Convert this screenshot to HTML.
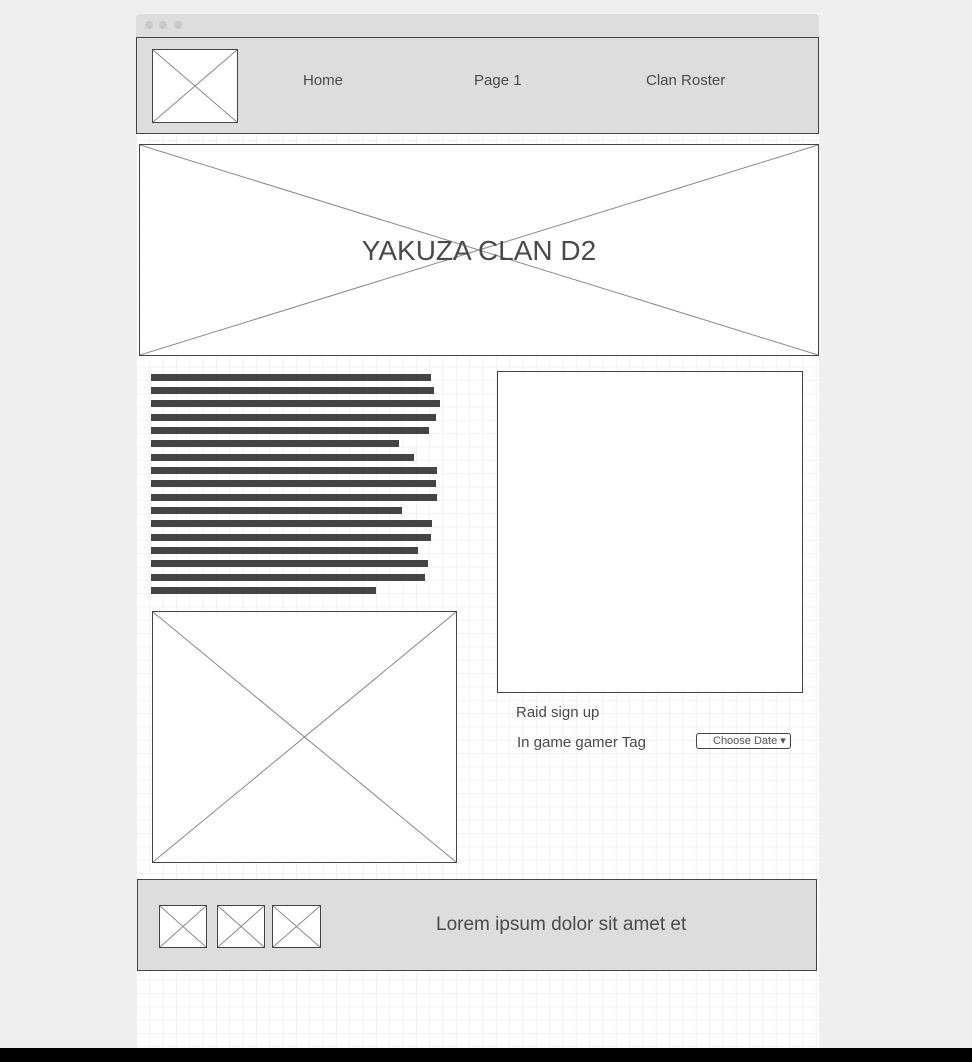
<!DOCTYPE html>
<html><head><style>
*{margin:0;padding:0;box-sizing:border-box}
body{width:972px;height:1062px;background:#efefef;position:relative;overflow:hidden;font-family:"Liberation Sans",sans-serif;color:#4a4a4a}
.abs{position:absolute}
.page{left:136px;top:14px;width:683px;height:1034px;background-color:#fff;background-image:linear-gradient(#f1f1f1 1px,transparent 1px),linear-gradient(90deg,#f1f1f1 1px,transparent 1px);background-size:13.33px 13.33px;background-position:0 6px}
.chrome{left:136px;top:14px;width:683px;height:23px;background:#ddd;border-radius:4px 4px 0 0}
.dot{width:8px;height:8px;border-radius:50%;background:#c8c8c8;top:21px}
.bar{left:151px;height:7px;background:#444}
.box{background:#fff;border:1px solid #444}
svg{position:absolute;left:0;top:0}
</style></head><body>
<div class="abs page"></div>
<div class="abs chrome"></div>
<div class="abs dot" style="left:145px"></div><div class="abs dot" style="left:159px"></div><div class="abs dot" style="left:174px"></div>
<div class="abs" style="left:136px;top:37px;width:683px;height:97px;background:#ddd;border:1px solid #444"></div>
<div class="abs box" style="left:152px;top:49px;width:86px;height:74px"><svg width="84" height="72"><path d="M0 0L84 72M84 0L0 72" stroke="#888" fill="none"/></svg></div>
<div class="abs" style="left:303px;top:72px;font-size:15px">Home</div>
<div class="abs" style="left:474px;top:72px;font-size:15px">Page 1</div>
<div class="abs" style="left:646px;top:72px;font-size:15px">Clan Roster</div>
<div class="abs box" style="left:139px;top:144px;width:680px;height:212px"><svg width="678" height="210"><path d="M0 0L678 210M678 0L0 210" stroke="#888" fill="none"/></svg></div>
<div class="abs" style="left:139px;top:235px;width:680px;text-align:center;font-size:28px">YAKUZA CLAN D2</div>
<div class="abs bar" style="top:374px;width:280px"></div>
<div class="abs bar" style="top:387px;width:283px"></div>
<div class="abs bar" style="top:400px;width:289px"></div>
<div class="abs bar" style="top:414px;width:285px"></div>
<div class="abs bar" style="top:427px;width:278px"></div>
<div class="abs bar" style="top:440px;width:248px"></div>
<div class="abs bar" style="top:454px;width:263px"></div>
<div class="abs bar" style="top:467px;width:286px"></div>
<div class="abs bar" style="top:480px;width:285px"></div>
<div class="abs bar" style="top:494px;width:286px"></div>
<div class="abs bar" style="top:507px;width:251px"></div>
<div class="abs bar" style="top:520px;width:281px"></div>
<div class="abs bar" style="top:534px;width:280px"></div>
<div class="abs bar" style="top:547px;width:267px"></div>
<div class="abs bar" style="top:560px;width:277px"></div>
<div class="abs bar" style="top:574px;width:274px"></div>
<div class="abs bar" style="top:587px;width:225px"></div>
<div class="abs box" style="left:152px;top:611px;width:305px;height:252px"><svg width="303" height="250"><path d="M0 0L303 250M303 0L0 250" stroke="#888" fill="none"/></svg></div>
<div class="abs box" style="left:497px;top:371px;width:306px;height:322px"></div>
<div class="abs" style="left:516px;top:704px;font-size:15px">Raid sign up</div>
<div class="abs" style="left:517px;top:734px;font-size:15px">In game gamer Tag</div>
<div class="abs" style="left:696px;top:733px;width:95px;height:16px;border:1px solid #444;border-radius:3px;font-size:11px;padding-left:16px;line-height:15px;color:#555">Choose Date ▾</div>
<div class="abs" style="left:137px;top:879px;width:680px;height:92px;background:#ddd;border:1px solid #444"></div>
<div class="abs box" style="left:159px;top:905px;width:48px;height:43px"><svg width="46" height="41"><path d="M0 0L46 41M46 0L0 41" stroke="#888" fill="none"/></svg></div>
<div class="abs box" style="left:217px;top:905px;width:48px;height:43px"><svg width="46" height="41"><path d="M0 0L46 41M46 0L0 41" stroke="#888" fill="none"/></svg></div>
<div class="abs box" style="left:272px;top:905px;width:49px;height:43px"><svg width="47" height="41"><path d="M0 0L47 41M47 0L0 41" stroke="#888" fill="none"/></svg></div>
<div class="abs" style="left:436px;top:914px;font-size:19px">Lorem ipsum dolor sit amet et</div>
<div class="abs" style="left:0;top:1048px;width:972px;height:14px;background:#000"></div>
</body></html>
